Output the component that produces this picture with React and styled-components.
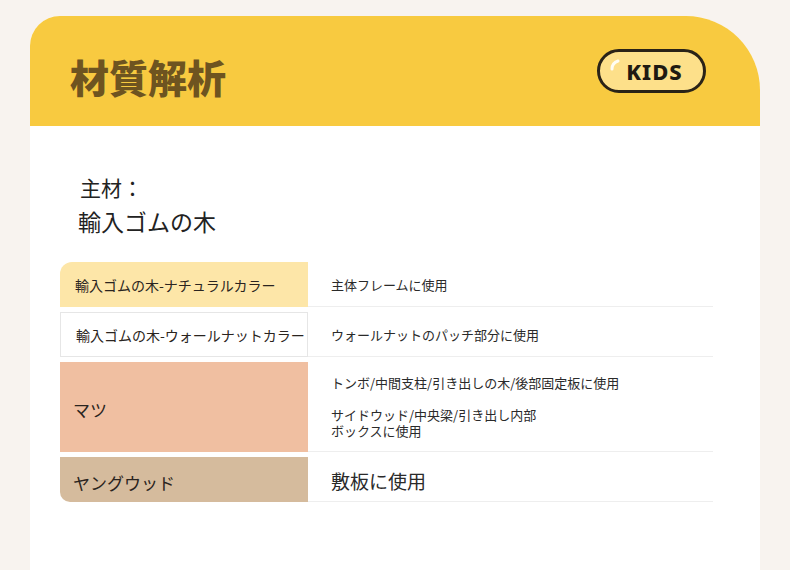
import React from "react";
import styled, { createGlobalStyle } from "styled-components";

const GlobalStyle = createGlobalStyle`
    html, body {
        margin: 0;
        padding: 0;
        background: #f8f3ef;
        overflow: hidden;
    }
    body {
        font-family: "Noto Sans CJK JP", "Noto Sans", sans-serif;
        color: #222;
    }
`;

const Page = styled.div`
    width: 790px;
    height: 570px;
    padding: 16px 0 0 30px;
    box-sizing: border-box;
`;

const Card = styled.div`
    width: 730px;
    min-height: 580px;
    background: #ffffff;
    border-radius: 30px 74px 0 0;
    overflow: hidden;
`;

// верхняя жёлтая полоса
const Header = styled.div`
    height: 110px;
    background: #f8ca40;
    display: flex;
    align-items: center;
    justify-content: space-between;
    padding: 0 54px 0 40px;
`;

const Title = styled.h1`
    margin: 10px 0 0;
    font-size: 39px;
    font-weight: 900;
    line-height: 1;
    color: #6e5420;
`;

const Pill = styled.div`
    position: relative;
    width: 109px;
    height: 44px;
    box-sizing: border-box;
    border: 3px solid #2a2317;
    border-radius: 22px;
    background: #fde08a;
    display: flex;
    align-items: center;
    justify-content: center;
    font-family: "Noto Sans", "Inter", sans-serif;
    font-weight: 800;
    font-size: 22px;
    letter-spacing: 1px;
    color: #1f1a12;
    padding-left: 6px;
`;

const Shine = styled.svg`
    position: absolute;
    left: 9px;
    top: 6px;
`;

const Body = styled.div`
    padding: 45px 47px 0 30px;
`;

const MainLabel = styled.div`
    padding-left: 20px;
    font-size: 21px;
    line-height: 32px;
    color: #222;
`;

const MainValue = styled.div`
    padding-left: 18px;
    font-size: 23px;
    line-height: 36px;
    color: #222;
    margin-bottom: 23px;
`;

const Row = styled.div`
    display: grid;
    grid-template-columns: 248px 1fr;
    height: ${p => p.tall ? 90 : 45}px;
    margin-bottom: 5px;
`;

const NameCell = styled.div`
    box-sizing: border-box;
    display: flex;
    align-items: center;
    padding-left: ${p => p.big ? 13 : 15}px;
    padding-top: ${p => p.big ? 5 : 0}px;
    background: ${p => p.bg || '#fff'};
    border: ${p => p.bordered ? '1px solid #e6e6e6' : 'none'};
    border-radius: ${p => p.radius || '0'};
    font-size: ${p => p.big ? 17 : 14}px;
    color: #2a2420;
`;

const UseCell = styled.div`
    box-sizing: border-box;
    display: flex;
    flex-direction: column;
    justify-content: center;
    padding: ${p => p.big ? '4px' : '1px'} 0 0 23px;
    border-bottom: 1px solid #eeeeee;
    font-size: ${p => p.big ? 19 : 13}px;
    color: #2a2a2a;
    gap: 16px;
`;

const Para = styled.div`
    line-height: ${p => p.big ? 24 : 16}px;
    white-space: pre-line;
`;

const rows = [
    {
        name: '輸入ゴムの木-ナチュラルカラー',
        bg: '#fde6a8',
        radius: '12px 0 0 0',
        uses: ['主体フレームに使用'],
    },
    {
        name: '輸入ゴムの木-ウォールナットカラー',
        bordered: true,
        uses: ['ウォールナットのパッチ部分に使用'],
    },
    {
        name: 'マツ',
        bg: '#f0bfa1',
        big: true,
        tall: true,
        uses: ['トンボ/中間支柱/引き出しの木/後部固定板に使用', 'サイドウッド/中央梁/引き出し内部\nボックスに使用'],
    },
    {
        name: 'ヤングウッド',
        bg: '#d5bb9d',
        big: true,
        radius: '0 0 0 10px',
        bigUse: true,
        uses: ['敷板に使用'],
    },
];

const App = () => {
    return (
        <>
            <GlobalStyle />
            <Page>
                <Card>
                    <Header>
                        <Title>材質解析</Title>
                        <Pill>
                            <Shine width="14" height="14" viewBox="0 0 14 14">
                                <path d="M3 11 Q3 5 9 3" stroke="#fffdf3" strokeWidth="3" fill="none" strokeLinecap="round" />
                            </Shine>
                            KIDS
                        </Pill>
                    </Header>
                    <Body>
                        <MainLabel>主材：</MainLabel>
                        <MainValue>輸入ゴムの木</MainValue>
                        {rows.map((r) => (
                            <Row key={r.name} tall={r.tall}>
                                <NameCell bg={r.bg} bordered={r.bordered} radius={r.radius} big={r.big}>
                                    {r.name}
                                </NameCell>
                                <UseCell big={r.bigUse}>
                                    {r.uses.map((u) => (
                                        <Para key={u} big={r.bigUse}>{u}</Para>
                                    ))}
                                </UseCell>
                            </Row>
                        ))}
                    </Body>
                </Card>
            </Page>
        </>
    );
};

export default App;
